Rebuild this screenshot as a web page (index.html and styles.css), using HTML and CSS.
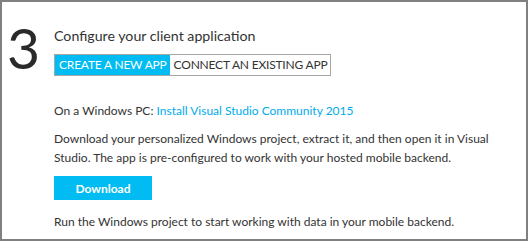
FILE: index.html
```html
<!DOCTYPE html>
<html lang="en">

<head>
    <meta charset="UTF-8">
    <title>Configure your client application</title>
    <link rel="stylesheet" href="styles.css">
</head>

<body>

    <div class="passo">
        <div class="numero">3</div>
        <div class="conteudo">
            <h2>Configure your client application</h2>
            <div class="abas">
                <span class="aba ativa">CREATE A NEW APP</span>
                <span class="aba">CONNECT AN EXISTING APP</span>
            </div>

            <p class="plataforma">On a Windows PC: <a href="#">Install Visual Studio Community 2015</a></p>
            <p>Download your personalized Windows project, extract it, and then open it in Visual Studio. The app is pre-configured to work with your hosted mobile backend.</p>
            <button class="baixar">Download</button>
            <p>Run the Windows project to start working with data in your mobile backend.</p>
        </div>
    </div>

</body>

</html>
```

FILE: styles.css
```css
html {
    background-color: #fff;
}

body {
    margin: 0;
    font-family: Lato, 'Open Sans', arial, sans-serif;
    color: #333;
}

.passo {
    display: flex;
    width: 524px;
    height: 237px;
    border: 2px solid #808080;
}

.numero {
    width: 52px;
    font-size: 57px;
    font-weight: 400;
    line-height: 1;
    color: #2a2a2a;
    padding: 17px 0 0 5px;
    box-sizing: border-box;
}

.conteudo {
    padding-top: 24px;
}

h2 {
    font-size: 14.2px;
    font-weight: 400;
    margin: 0 0 7px;
    line-height: 20px;
}

.abas {
    display: inline-flex;
    border: 1px solid #a6a6a6;
}

.aba {
    font-size: 12px;
    line-height: 20px;
    padding: 0 3px 0 4px;
    letter-spacing: -0.2px;
}

.aba.ativa {
    background-color: #00bcf2;
    color: #fff;
}

p {
    font-size: 12px;
    line-height: 19px;
    margin: 0;
    width: 440px;
}

.plataforma {
    margin: 25px 0 9px;
}

a {
    color: #00abec;
    text-decoration: none;
}

.baixar {
    display: block;
    width: 98px;
    height: 24px;
    margin: 9px 0 12px;
    border: none;
    background-color: #00bcf2;
    color: #fff;
    font-family: inherit;
    font-size: 12px;
    font-weight: 700;
}
```
